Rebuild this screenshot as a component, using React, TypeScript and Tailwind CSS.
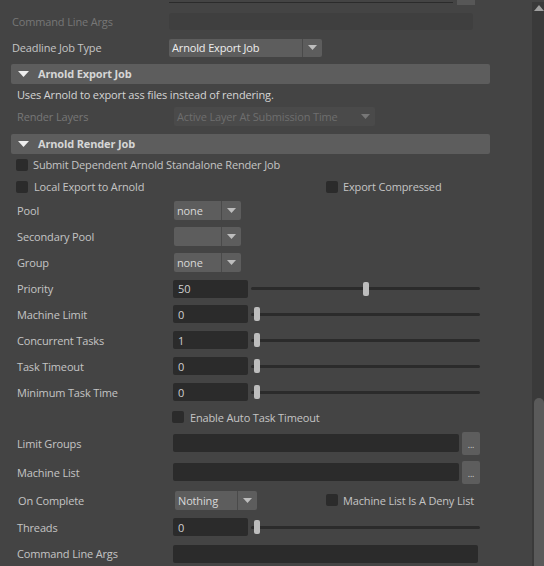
const font = { fontFamily: '"Open Sans", "Noto Sans", sans-serif' };

const Check = () => <span className="inline-block w-[12px] h-[12px] rounded-[2px] bg-[#2b2b2b] shrink-0" />;

const Label = ({ children, dim = false, x = 17 }: { children: React.ReactNode; dim?: boolean; x?: number }) => (
  <div
    className={`shrink-0 w-[173px] ${dim ? "text-[#777777]" : "text-[#c4c4c4]"}`}
    style={{ paddingLeft: x }}
  >
    {children}
  </div>
);

const Arrow = ({ dim = false }: { dim?: boolean }) => (
  <svg width="9" height="5" viewBox="0 0 9 5" className="shrink-0">
    <path d="M0 0 H9 L4.5 5 Z" fill={dim ? "#777777" : "#bdbdbd"} />
  </svg>
);

const Combo = ({ text, w, split }: { text: string; w: number; split: number }) => (
  <div className="flex h-[19px] rounded-[2px] bg-[#5d5d5d] overflow-hidden" style={{ width: w }}>
    <div className="flex items-center pl-[3px] text-[#d8d8d8] border-r border-[#4a4a4a]" style={{ width: split }}>
      {text}
    </div>
    <div className="flex-1 flex items-center justify-center">
      <Arrow />
    </div>
  </div>
);

const Slider = ({ value, pos }: { value: string; pos: number }) => (
  <div className="flex items-center">
    <div className="w-[75px] h-[18px] rounded-[2px] bg-[#2b2b2b] flex items-center pl-[5px] text-[#d0d0d0]">
      {value}
    </div>
    <div className="relative ml-[3px] w-[229px] h-[14px] flex items-center">
      <div className="w-full h-[3px] rounded-full bg-[#2b2b2b]" />
      <div className="absolute top-0 w-[6px] h-[14px] rounded-[2px] bg-[#bdbdbd]" style={{ left: pos }} />
    </div>
  </div>
);

const Header = ({ title }: { title: string }) => (
  <div className="ml-[11px] w-[479px] h-[20px] rounded-[2px] bg-[#5d5d5d] flex items-center">
    <svg width="11" height="6" viewBox="0 0 11 6" className="ml-[7px]">
      <path d="M0 0 H11 L5.5 6 Z" fill="#eeeeee" />
    </svg>
    <span className="ml-[9px] font-bold text-[#d6d6d6]">{title}</span>
  </div>
);

const Row = ({ h, children }: { h: number; children: React.ReactNode }) => (
  <div className="flex items-center" style={{ height: h }}>
    {children}
  </div>
);

const Dots = () => (
  <div className="ml-[3px] w-[18px] h-[23px] rounded-[2px] bg-[#5d5d5d] flex items-end justify-center pb-[6px] text-[#d0d0d0] text-[9px]">
    ...
  </div>
);

export default function App() {
  return (
    <div
      className="w-[544px] h-[566px] bg-[#444444] flex overflow-hidden text-[11px] leading-none tracking-[-0.15px]"
      style={font}
    >
      <div className="w-[532px] flex flex-col">
        <div className="h-[9px] relative">
          <div className="absolute left-[169px] top-[2px] w-[284px] h-[1px] bg-[#2b2b2b]" />
          <div className="absolute left-[457px] top-0 w-[18px] h-[5px] bg-[#575757]" />
        </div>
        <Row h={26}>
          <Label dim x={12}>Command Line Args</Label>
          <div className="ml-[-4px] w-[304px] h-[17px] rounded-[3px] bg-[#3f3f3f]" />
        </Row>
        <Row h={26}>
          <Label x={12}>Deadline Job Type</Label>
          <div className="ml-[-4px]">
            <div className="flex h-[18px] w-[153px] rounded-[2px] bg-[#5d5d5d] overflow-hidden">
              <div className="w-[134px] flex items-center pl-[3px] text-[#eeeeee] border-r border-[#4a4a4a]">Arnold Export Job</div>
              <div className="flex-1 flex items-center justify-center"><Arrow /></div>
            </div>
          </div>
        </Row>
        <div className="h-[3px]" />
        <Header title="Arnold Export Job" />
        <Row h={22}>
          <span className="pl-[17px] text-[#d4d4d4]">Uses Arnold to export ass files instead of rendering.</span>
        </Row>
        <Row h={22}>
          <Label dim>Render Layers</Label>
          <div className="ml-[1px] flex items-center justify-between w-[201px] h-[19px] rounded-[2px] bg-[#4a4a4a] pl-[3px] pr-[5px] text-[#6e6e6e]">
            Active Layer At Submission Time
            <Arrow dim />
          </div>
        </Row>
        <div className="h-[6px]" />
        <Header title="Arnold Render Job" />
        <Row h={22}>
          <div className="pl-[16px] flex items-center gap-[5px] text-[#c4c4c4]">
            <Check />
            Submit Dependent Arnold Standalone Render Job
          </div>
        </Row>
        <Row h={22}>
          <div className="pl-[16px] w-[326px] flex items-center gap-[6px] text-[#c4c4c4]">
            <Check />
            Local Export to Arnold
          </div>
          <div className="flex items-center gap-[5px] text-[#c4c4c4]">
            <Check />
            Export Compressed
          </div>
        </Row>
        <Row h={26}>
          <Label>Pool</Label>
          <div className="ml-[1px]"><Combo text="none" w={67} split={48} /></div>
        </Row>
        <Row h={26}>
          <Label>Secondary Pool</Label>
          <div className="ml-[1px]"><Combo text="" w={67} split={48} /></div>
        </Row>
        <Row h={26}>
          <Label>Group</Label>
          <div className="ml-[1px]"><Combo text="none" w={67} split={48} /></div>
        </Row>
        <Row h={26}>
          <Label>Priority</Label>
          <Slider value="50" pos={112} />
        </Row>
        <Row h={26}>
          <Label>Machine Limit</Label>
          <Slider value="0" pos={3} />
        </Row>
        <Row h={26}>
          <Label>Concurrent Tasks</Label>
          <Slider value="1" pos={3} />
        </Row>
        <Row h={26}>
          <Label>Task Timeout</Label>
          <Slider value="0" pos={3} />
        </Row>
        <Row h={26}>
          <Label>Minimum Task Time</Label>
          <Slider value="0" pos={3} />
        </Row>
        <Row h={24}>
          <div className="pl-[172px] flex items-center gap-[6px] text-[#c4c4c4]">
            <Check />
            Enable Auto Task Timeout
          </div>
        </Row>
        <Row h={28}>
          <Label>Limit Groups</Label>
          <div className="w-[286px] h-[18px] rounded-[2px] bg-[#2b2b2b]" />
          <Dots />
        </Row>
        <Row h={30}>
          <Label>Machine List</Label>
          <div className="w-[286px] h-[18px] rounded-[2px] bg-[#2b2b2b]" />
          <Dots />
        </Row>
        <Row h={26}>
          <Label x={18}>On Complete</Label>
          <div className="ml-[2px] w-[151px]"><Combo text="Nothing" w={82} split={63} /></div>
          <div className="flex items-center gap-[5px] text-[#c4c4c4]">
            <Check />
            Machine List Is A Deny List
          </div>
        </Row>
        <Row h={28}>
          <Label>Threads</Label>
          <Slider value="0" pos={3} />
        </Row>
        <Row h={25}>
          <Label>Command Line Args</Label>
          <div className="w-[305px] h-[18px] rounded-[2px] bg-[#2b2b2b]" />
        </Row>
      </div>
      <div className="w-[12px] mt-[2px] bg-[#3a3a3a] flex flex-col items-center">
        <svg width="10" height="6" viewBox="0 0 10 6" className="mt-[3px] ml-[1px]">
          <path d="M0 6 L5 0 L10 6 Z" fill="#a0a0a0" />
        </svg>
        <div className="mt-auto w-[10px] h-[168px] rounded-t-[5px] bg-[#5a5a5a] ml-[1px]" />
      </div>
    </div>
  );
}
